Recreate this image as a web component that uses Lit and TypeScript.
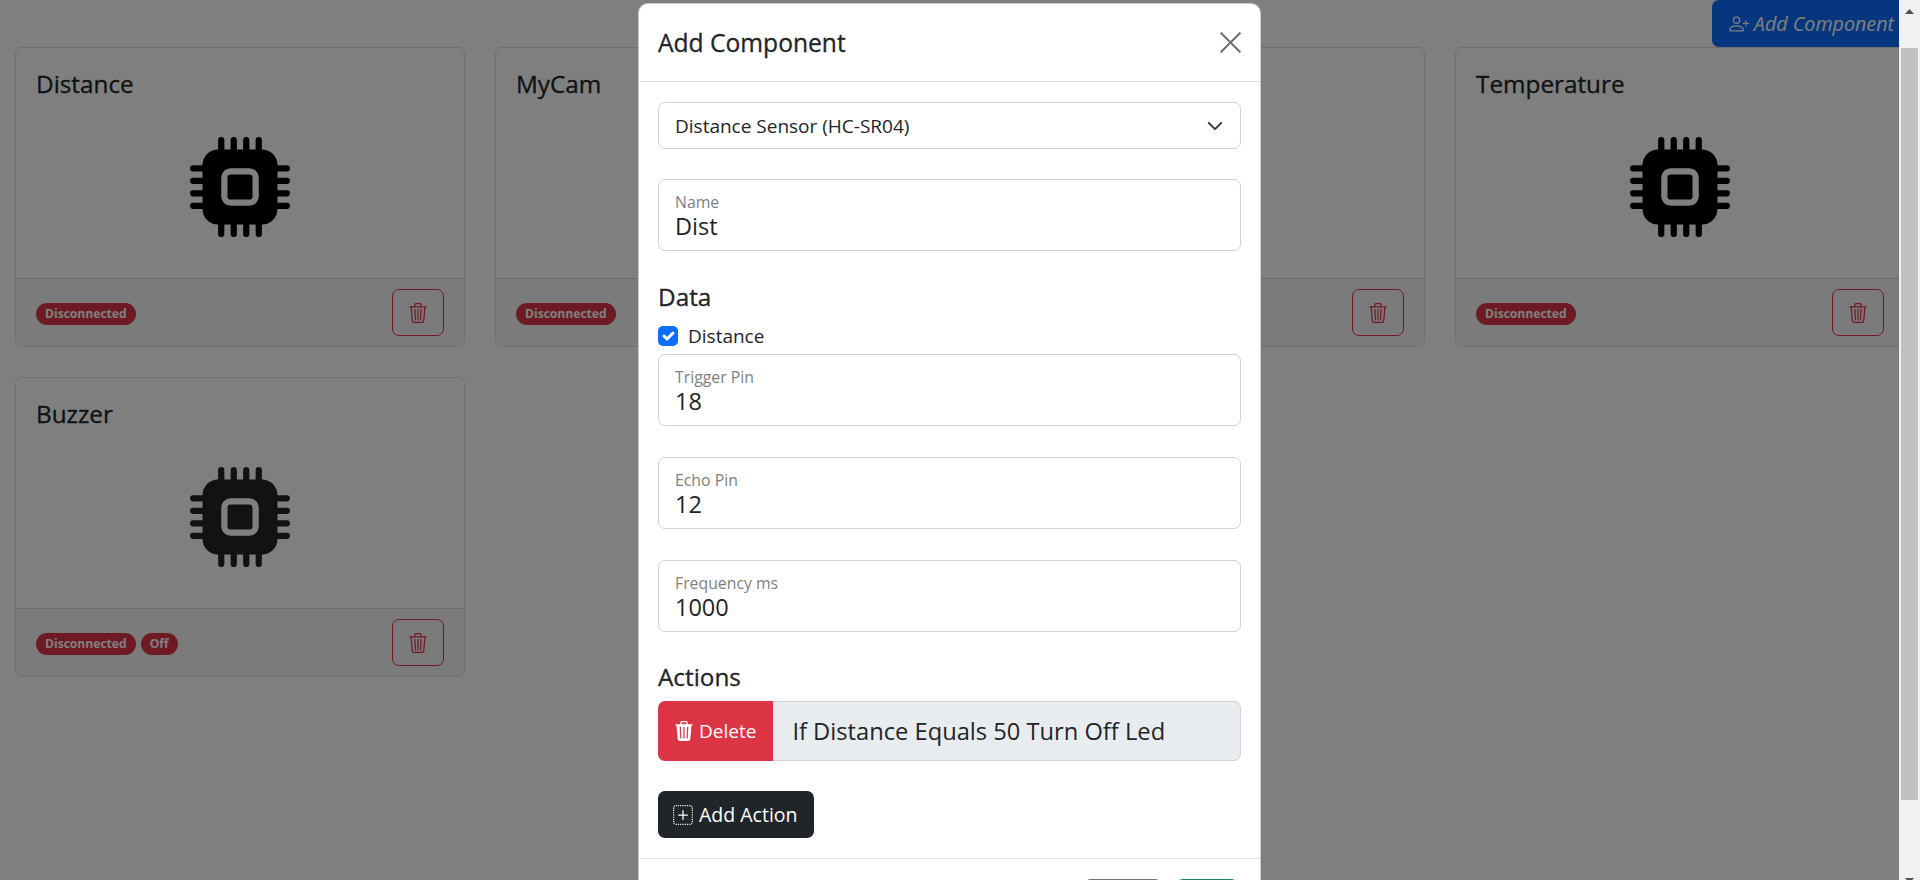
import { LitElement, css, html, svg } from "lit";
import { customElement } from "lit/decorators.js";

const trash = svg`<path d="M6.5 1h3a.5.5 0 0 1 .5.5v1H6v-1a.5.5 0 0 1 .5-.5ZM11 2.5v-1A1.5 1.5 0 0 0 9.5 0h-3A1.5 1.5 0 0 0 5 1.5v1H2.506a.58.58 0 0 0-.01 0H1.5a.5.5 0 0 0 0 1h.538l.853 10.66A2 2 0 0 0 4.885 16h6.23a2 2 0 0 0 1.994-1.84l.853-10.66h.538a.5.5 0 0 0 0-1h-.995a.59.59 0 0 0-.01 0H11Zm1.958 1-.846 10.58a1 1 0 0 1-.997.92h-6.23a1 1 0 0 1-.997-.92L3.042 3.5h9.916Zm-7.487 1a.5.5 0 0 1 .528.47l.5 8.5a.5.5 0 0 1-.998.06L5 5.03a.5.5 0 0 1 .47-.53Zm5.058 0a.5.5 0 0 1 .47.53l-.5 8.5a.5.5 0 1 1-.998-.06l.5-8.5a.5.5 0 0 1 .528-.47ZM8 4.5a.5.5 0 0 1 .5.5v8.5a.5.5 0 0 1-1 0V5a.5.5 0 0 1 .5-.5Z"/>`;
const trashFill = svg`<path d="M11 1.5v1h3.5a.5.5 0 0 1 0 1h-.538l-.853 10.66A2 2 0 0 1 11.115 16h-6.23a2 2 0 0 1-1.994-1.84L2.038 3.5H1.5a.5.5 0 0 1 0-1H5v-1A1.5 1.5 0 0 1 6.5 0h3A1.5 1.5 0 0 1 11 1.5Zm-5 0v1h4v-1a.5.5 0 0 0-.5-.5h-3a.5.5 0 0 0-.5.5ZM4.5 5.029l.5 8.5a.5.5 0 1 0 .998-.06l-.5-8.5a.5.5 0 1 0-.998.06Zm6.53-.528a.5.5 0 0 0-.528.47l-.5 8.5a.5.5 0 0 0 .998.058l.5-8.5a.5.5 0 0 0-.47-.528ZM8 4.5a.5.5 0 0 0-.5.5v8.5a.5.5 0 0 0 1 0V5a.5.5 0 0 0-.5-.5Z"/>`;
const cpu = svg`<path d="M6.5 6a.5.5 0 0 0-.5.5v3a.5.5 0 0 0 .5.5h3a.5.5 0 0 0 .5-.5v-3a.5.5 0 0 0-.5-.5h-3z"/><path d="M5.5.5a.5.5 0 0 0-1 0V2A2.5 2.5 0 0 0 2 4.5H.5a.5.5 0 0 0 0 1H2v1H.5a.5.5 0 0 0 0 1H2v1H.5a.5.5 0 0 0 0 1H2v1H.5a.5.5 0 0 0 0 1H2A2.5 2.5 0 0 0 4.5 14v1.5a.5.5 0 0 0 1 0V14h1v1.5a.5.5 0 0 0 1 0V14h1v1.5a.5.5 0 0 0 1 0V14h1v1.5a.5.5 0 0 0 1 0V14a2.5 2.5 0 0 0 2.5-2.5h1.5a.5.5 0 0 0 0-1H14v-1h1.5a.5.5 0 0 0 0-1H14v-1h1.5a.5.5 0 0 0 0-1H14v-1h1.5a.5.5 0 0 0 0-1H14A2.5 2.5 0 0 0 11.5 2V.5a.5.5 0 0 0-1 0V2h-1V.5a.5.5 0 0 0-1 0V2h-1V.5a.5.5 0 0 0-1 0V2h-1V.5zm1 4.5h3A1.5 1.5 0 0 1 11 6.5v3A1.5 1.5 0 0 1 9.5 11h-3A1.5 1.5 0 0 1 5 9.5v-3A1.5 1.5 0 0 1 6.5 5z"/>`;
const personPlus = svg`<path d="M6 8a3 3 0 1 0 0-6 3 3 0 0 0 0 6zm2-3a2 2 0 1 1-4 0 2 2 0 0 1 4 0zm4 8c0 1-1 1-1 1H1s-1 0-1-1 1-4 6-4 6 3 6 4zm-1-.004c-.001-.246-.154-.986-.832-1.664C9.516 10.68 8.289 10 6 10c-2.29 0-3.516.68-4.168 1.332-.678.678-.83 1.418-.832 1.664h10z"/><path fill-rule="evenodd" d="M13.5 5a.5.5 0 0 1 .5.5V7h1.5a.5.5 0 0 1 0 1H14v1.5a.5.5 0 0 1-1 0V8h-1.5a.5.5 0 0 1 0-1H13V5.5a.5.5 0 0 1 .5-.5z"/>`;
const plusDotted = svg`<path d="M2.5 0c-.166 0-.33.016-.487.048l.194.98A1.51 1.51 0 0 1 2.5 1h.458V0H2.5zm2.292 0h-.917v1h.917V0zm1.833 0h-.917v1h.917V0zm1.833 0h-.916v1h.916V0zm1.834 0h-.917v1h.917V0zm1.833 0h-.917v1h.917V0zM13.5 0h-.458v1h.458c.1 0 .199.01.293.029l.194-.981A2.51 2.51 0 0 0 13.5 0zm2.079 1.11a2.511 2.511 0 0 0-.69-.689l-.556.831c.164.11.305.251.415.415l.83-.556zM1.11.421a2.511 2.511 0 0 0-.689.69l.831.556c.11-.164.251-.305.415-.415L1.11.422zM16 2.5c0-.166-.016-.33-.048-.487l-.98.194c.018.094.028.192.028.293v.458h1V2.5zM.048 2.013A2.51 2.51 0 0 0 0 2.5v.458h1V2.5c0-.1.01-.199.029-.293l-.981-.194zM0 3.875v.917h1v-.917H0zm16 .917v-.917h-1v.917h1zM0 5.708v.917h1v-.917H0zm16 .917v-.917h-1v.917h1zM0 7.542v.916h1v-.916H0zm15 .916h1v-.916h-1v.916zM0 9.375v.917h1v-.917H0zm16 .917v-.917h-1v.917h1zm-16 .916v.917h1v-.917H0zm16 .917v-.917h-1v.917h1zm-16 .917v.458c0 .166.016.33.048.487l.98-.194A1.51 1.51 0 0 1 1 13.5v-.458H0zm16 .458v-.458h-1v.458c0 .1-.01.199-.029.293l.981.194c.032-.158.048-.32.048-.487zM.421 14.89c.183.272.417.506.69.689l.556-.831a1.51 1.51 0 0 1-.415-.415l-.83.556zm14.469.689c.272-.183.506-.417.689-.69l-.831-.556c-.11.164-.251.305-.415.415l.556.83zm-12.877.373c.158.032.32.048.487.048h.458v-1H2.5c-.1 0-.199-.01-.293-.029l-.194.981zM13.5 16c.166 0 .33-.016.487-.048l-.194-.98A1.51 1.51 0 0 1 13.5 15h-.458v1h.458zm-9.625 0h.917v-1h-.917v1zm1.833 0h.917v-1h-.917v1zm1.834-1v1h.916v-1h-.916zm1.833 1h.917v-1h-.917v1zm1.833 0h.917v-1h-.917v1zM8.5 4.5a.5.5 0 0 0-1 0v3h-3a.5.5 0 0 0 0 1h3v3a.5.5 0 0 0 1 0v-3h3a.5.5 0 0 0 0-1h-3v-3z"/>`;

const icon = (body: unknown, size: number) =>
  html`<svg width=${size} height=${size} viewBox="0 0 16 16" fill="currentColor">${body}</svg>`;

interface Component {
  name: string;
  badges: string[];
  dim?: boolean;
}

const components: Component[] = [
  { name: "Distance", badges: ["Disconnected"] },
  { name: "MyCam", badges: ["Disconnected"] },
  { name: "Led", badges: ["Disconnected"] },
  { name: "Temperature", badges: ["Disconnected"] },
  { name: "Buzzer", badges: ["Disconnected", "Off"], dim: true },
];

const pins = [
  { label: "Trigger Pin", value: "18" },
  { label: "Echo Pin", value: "12" },
  { label: "Frequency ms", value: "1000" },
];

@customElement("app-root")
export class AppRoot extends LitElement {
  static styles = css`
    * {
      box-sizing: border-box;
    }

    :host {
      display: block;
      position: relative;
      width: 1920px;
      height: 880px;
      overflow: hidden;
      font-family: "Open Sans", "Noto Sans", sans-serif;
      color: #212529;
      background: #fff;
    }

    .layout {
      display: flex;
      height: 880px;
    }

    .viewport {
      position: relative;
      width: 1899px;
      height: 880px;
      overflow: hidden;
    }

    .page {
      width: 1906px;
    }

    .toolbar {
      display: flex;
      justify-content: flex-end;
      height: 47px;
    }

    .add-component {
      display: flex;
      align-items: center;
      gap: 5px;
      height: 47px;
      padding: 0 12px 0 17px;
      background: #0d6efd;
      color: #fff;
      font-size: 19.7px;
      font-style: italic;
      border-radius: 7px 0 0 7px;
    }

    .grid {
      display: grid;
      grid-template-columns: repeat(4, 450px);
      gap: 30px;
      padding-left: 15px;
    }

    .card {
      height: 300px;
      display: flex;
      flex-direction: column;
      border: 1px solid rgba(0, 0, 0, 0.125);
      border-radius: 7px;
      overflow: hidden;
    }

    .card-body {
      flex: 1;
      padding: 21px 20px 0;
    }

    .card-title {
      margin: 0;
      font-size: 24.3px;
      font-weight: 400;
      line-height: 30px;
      -webkit-text-stroke: 0.3px currentColor;
    }

    .chip {
      display: flex;
      justify-content: center;
      margin-top: 38px;
      color: #000;
    }

    .chip.dim {
      color: #212529;
    }

    .card-footer {
      display: flex;
      align-items: center;
      justify-content: space-between;
      height: 68px;
      padding: 0 20px;
      border-top: 1px solid rgba(0, 0, 0, 0.125);
      background: rgba(0, 0, 0, 0.03);
    }

    .badges {
      display: flex;
      gap: 5px;
      margin-top: 3px;
    }

    .badge {
      height: 22px;
      padding: 0 9px;
      border-radius: 11px;
      background: #dc3545;
      color: #fff;
      font-size: 12.1px;
      font-weight: 700;
      line-height: 22px;
    }

    .trash-btn {
      display: flex;
      align-items: center;
      justify-content: center;
      width: 52px;
      height: 47px;
      border: 1px solid #dc3545;
      border-radius: 7px;
      color: #dc3545;
    }

    .backdrop {
      position: absolute;
      inset: 0;
      background: rgba(0, 0, 0, 0.5);
    }

    .modal {
      position: absolute;
      top: 3px;
      left: 638px;
      width: 623px;
      background: #fff;
      border: 1px solid rgba(0, 0, 0, 0.2);
      border-radius: 10px;
    }

    .modal-header {
      display: flex;
      align-items: center;
      justify-content: space-between;
      height: 78px;
      padding: 0 19px;
      border-bottom: 1px solid #dee2e6;
    }

    .modal-title {
      margin: 0;
      font-size: 24.6px;
      font-weight: 400;
      -webkit-text-stroke: 0.3px currentColor;
    }

    .close {
      display: block;
      color: #6c6e70;
    }

    .modal-body {
      padding: 20px 19px;
    }

    .select {
      display: flex;
      align-items: center;
      justify-content: space-between;
      height: 47px;
      padding: 0 15px 0 16px;
      border: 1px solid #ced4da;
      border-radius: 7px;
      font-size: 19px;
    }

    .floating {
      height: 72px;
      padding: 13px 16px 0;
      border: 1px solid #ced4da;
      border-radius: 7px;
    }

    .floating label {
      display: block;
      font-size: 15.8px;
      line-height: 18px;
      color: #7d7f81;
    }

    .floating div {
      font-size: 23.5px;
      line-height: 30px;
    }

    .name {
      margin-top: 30px;
    }

    .section {
      margin: 30px 0 0;
      font-size: 24.3px;
      font-weight: 400;
      line-height: 32px;
      -webkit-text-stroke: 0.3px currentColor;
    }

    .section.actions {
      margin-top: 29px;
    }

    .check {
      display: flex;
      align-items: center;
      gap: 10px;
      height: 30px;
      margin-top: 8px;
      font-size: 19px;
    }

    .box {
      display: flex;
      width: 20px;
      height: 20px;
      border-radius: 5px;
      background: #0d6efd;
    }

    .pins {
      display: flex;
      flex-direction: column;
      gap: 31px;
      margin-top: 3px;
    }

    .action {
      display: flex;
      height: 60px;
      margin-top: 8px;
      font-size: 23.7px;
    }

    .delete {
      display: flex;
      align-items: center;
      gap: 5px;
      padding: 0 17px 0 16px;
      border-radius: 7px 0 0 7px;
      background: #dc3545;
      color: #fff;
      font-size: 19px;
    }

    .action-text {
      flex: 1;
      display: flex;
      align-items: center;
      padding-left: 19px;
      border: 1px solid #ced4da;
      border-left: none;
      border-radius: 0 7px 7px 0;
      background: #e9ecef;
    }

    .add-action {
      display: flex;
      align-items: center;
      gap: 6px;
      width: fit-content;
      height: 47px;
      margin-top: 30px;
      padding: 0 16px 0 15px;
      border-radius: 7px;
      background: #212529;
      color: #fff;
      font-size: 19.5px;
    }

    .modal-footer {
      display: flex;
      justify-content: flex-end;
      gap: 14px;
      padding: 20px 22px 20px 20px;
      border-top: 1px solid #dee2e6;
    }

    .modal-footer span {
      height: 47px;
      border-radius: 7px;
    }

    .close-btn {
      width: 78px;
      background: #6c757d;
    }

    .save-btn {
      width: 62px;
      background: #198754;
    }

    .scrollbar {
      display: flex;
      flex-direction: column;
      width: 21px;
      height: 880px;
      overflow: hidden;
      background: #f1f1f1;
      color: #505050;
    }

    .scrollbar svg,
    .thumb {
      flex: none;
      display: block;
    }

    .arrow-up {
      margin: 9px 0 0 6px;
    }

    .thumb {
      width: 17px;
      height: 752px;
      margin: 34px 0 0 2px;
      background: #c1c1c1;
    }

    .arrow-down {
      margin: 78px 0 0 6px;
    }
  `;

  render() {
    return html`
      <div class="layout">
        <div class="viewport">
          <div class="page">
            <div class="toolbar">
              <div class="add-component">${icon(personPlus, 20)} Add Component</div>
            </div>
            <div class="grid">${components.map((c) => this.renderCard(c))}</div>
          </div>
          <div class="backdrop"></div>
          ${this.renderModal()}
        </div>
        <div class="scrollbar">
          <svg class="arrow-up" width="9" height="5" viewBox="0 0 9 5" fill="currentColor"><path d="M4.500 0L9 5H0z"/></svg>
          <div class="thumb"></div>
          <svg class="arrow-down" width="9" height="5" viewBox="0 0 9 5" fill="currentColor"><path d="M0 0h9L4.500 5z"/></svg>
        </div>
      </div>
    `;
  }

  renderCard(c: Component) {
    return html`
      <div class="card">
        <div class="card-body">
          <h5 class="card-title">${c.name}</h5>
          <div class="chip ${c.dim ? "dim" : ""}">${icon(cpu, 100)}</div>
        </div>
        <div class="card-footer">
          <div class="badges">${c.badges.map((b) => html`<span class="badge">${b}</span>`)}</div>
          <div class="trash-btn">${icon(trash, 20)}</div>
        </div>
      </div>
    `;
  }

  renderModal() {
    return html`
      <div class="modal">
        <div class="modal-header">
          <h5 class="modal-title">Add Component</h5>
          <svg class="close" width="21" height="21" viewBox="0 0 16 16" fill="none" stroke="currentColor" stroke-width="1.5"><path d="M.5.5l15 15M15.500.5l-15 15"/></svg>
        </div>
        <div class="modal-body">
          <div class="select">
            <span>Distance Sensor (HC-SR04)</span>
            <svg width="20" height="20" viewBox="0 0 16 16" fill="none" stroke="#343a40" stroke-width="1.6" stroke-linecap="round" stroke-linejoin="round"><path d="M3 5.500l5 5 5-5"/></svg>
          </div>
          <div class="floating name"><label>Name</label><div>Dist</div></div>
          <h5 class="section">Data</h5>
          <div class="check">
            <span class="box"><svg width="20" height="20" viewBox="0 0 20 20" fill="none" stroke="#fff" stroke-width="3" stroke-linecap="round" stroke-linejoin="round"><path d="M6 10l3 3 6-6"/></svg></span>
            Distance
          </div>
          <div class="pins">
            ${pins.map((p) => html`<div class="floating"><label>${p.label}</label><div>${p.value}</div></div>`)}
          </div>
          <h5 class="section actions">Actions</h5>
          <div class="action">
            <div class="delete">${icon(trashFill, 20)} Delete</div>
            <div class="action-text">If Distance Equals 50 Turn Off Led</div>
          </div>
          <div class="add-action">${icon(plusDotted, 20)} Add Action</div>
        </div>
        <div class="modal-footer">
          <span class="close-btn"></span>
          <span class="save-btn"></span>
        </div>
      </div>
    `;
  }
}

declare global {
  interface HTMLElementTagNameMap {
    "app-root": AppRoot;
  }
}
